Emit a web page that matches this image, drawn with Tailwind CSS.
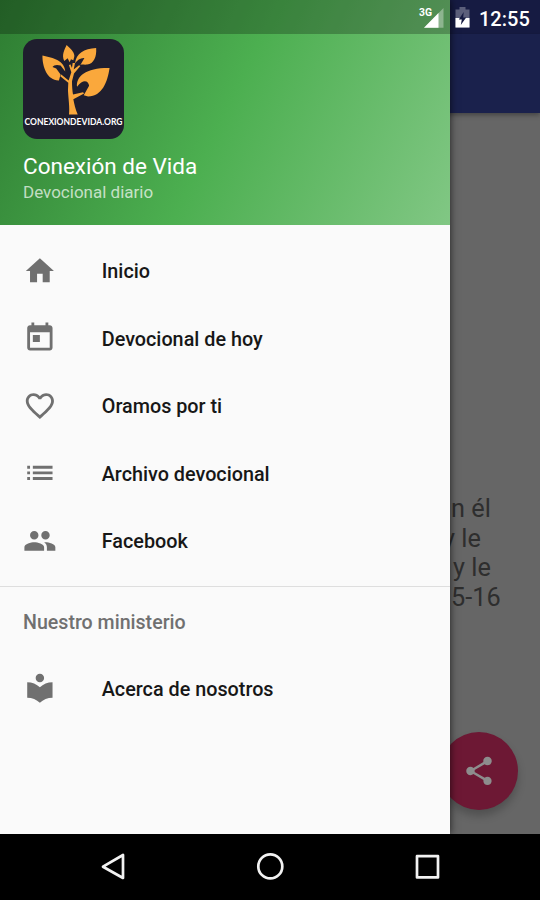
<!DOCTYPE html>
<html lang="es">
<head>
<meta charset="utf-8">
<title>Conexión de Vida</title>
<script src="https://cdn.jsdelivr.net/npm/@tailwindcss/browser@4"></script>
</head>
<body class="w-[540px] h-[900px] overflow-hidden bg-black font-['Roboto','Noto_Sans',sans-serif]">
<div class="relative w-[540px] h-[900px] overflow-hidden flex flex-col">
  <!-- Dimmed page -->
  <main class="h-[834px] shrink-0 bg-[#666666] flex flex-col">
    <div class="h-[34px] shrink-0 bg-[#161b42]"></div>
    <div class="h-[79px] shrink-0 bg-[#1a214c] shadow-[0_2px_5px_rgba(0,0,0,0.35)]"></div>
    <div class="pt-[381px] text-[25.3px] leading-[29.6px] text-[#2e2e2e] whitespace-nowrap">
      <p class="pl-[451px]">n él</p>
      <p class="pl-[443px]">y le</p>
      <p class="pl-[453px]">y le</p>
      <p class="pl-[451px]">5-16</p>
    </div>
    <div class="mt-auto mb-[24px] ml-[440px] size-[78px] rounded-full bg-[#6d1834] shadow-[0_6px_9px_rgba(0,0,0,0.22)] flex items-center justify-center">
      <svg class="size-[34px]" viewBox="0 0 24 24" fill="#8d8d8d"><path d="M18 16.08c-.76 0-1.44.3-1.96.77L8.91 12.7c.05-.23.09-.46.09-.7s-.04-.47-.09-.7l7.05-4.11c.54.5 1.25.81 2.04.81 1.66 0 3-1.34 3-3s-1.34-3-3-3-3 1.34-3 3c0 .24.04.47.09.7L8.04 9.81C7.5 9.31 6.79 9 6 9c-1.66 0-3 1.34-3 3s1.34 3 3 3c.79 0 1.5-.31 2.04-.81l7.12 4.16c-.05.21-.08.43-.08.65 0 1.61 1.31 2.92 2.92 2.92s2.92-1.31 2.92-2.92-1.31-2.92-2.92-2.92z"/></svg>
    </div>
  </main>

  <!-- System navigation -->
  <footer class="relative z-20 h-[66px] shrink-0 bg-black">
    <svg class="w-[540px] h-[66px]" viewBox="0 0 540 66" fill="none" stroke="#f2f2f2" stroke-width="2.7" stroke-linejoin="round"><path d="M103 32.700 123 21V44Z"/><circle cx="270.300" cy="32.400" r="12"/><rect x="417" y="22.200" width="21" height="21.200"/></svg>
  </footer>

  <!-- Drawer over the page -->
  <aside class="absolute z-10 left-0 top-0 w-[450px] h-[834px] bg-[#fafafa] shadow-[0_0_8px_rgba(0,0,0,0.7)] flex flex-col">
    <header class="h-[225px] shrink-0 px-[23px] pt-[39px] bg-[linear-gradient(116deg,#2e7d32_0%,#4caf50_50%,#81c784_100%)]">
      <svg class="block w-[101px] h-[100px] overflow-visible" viewBox="25 12 301 301" preserveAspectRatio="none">
        <rect x="25" y="12" width="301" height="301" rx="42" fill="#1f1e2e"/>
        <g fill="#faa83c">
          <path d="M155 30C165 40 178 50 178 62C178 68 176 72 175 76L168 73L164 82L158 70L148 78C139 60 149 44 155 30Z"/>
          <path d="M243 39C245 65 236 87 216 89C207 90 202 88 196 90L208 69C196 68 187 76 180 85C184 54 206 42 243 39Z"/>
          <path d="M83 62C116 69 149 78 151 110L137 92C127 88 116 90 113 96L124 101L137 119L132 137C98 138 82 96 83 62Z"/>
          <path d="M283 99C277 141 261 184 219 185L206 181L222 153C220 138 205 130 186 156C183 123 213 98 283 99Z"/>
          <path d="M173 84H180L176 104L192 91L196 93L177 116L171 139C171 155 172 166 174 179L204 172L207 176L175 193C178 209 181 222 188 239H162C165 220 160 190 159 166L160 144L136 124L139 119L161 137L169 112L162 91L166 88L171 99Z"/>
        </g>
        <text x="175.500" y="270" text-anchor="middle" textLength="292" lengthAdjust="spacingAndGlyphs" fill="#fff" font-family="Lato, sans-serif" font-weight="700" font-size="26">CONEXIONDEVIDA.ORG</text>
      </svg>
      <h1 class="mt-[12.5px] text-[22.5px] leading-[28px] text-white whitespace-nowrap">Conexión de Vida</h1>
      <p class="mt-[0.5px] text-[17px] leading-[24px] text-white/70 whitespace-nowrap">Devocional diario</p>
    </header>

    <nav class="pt-[12px] text-[19.8px] font-medium text-[#171717] whitespace-nowrap">
      <a class="flex h-[67.5px] items-center pl-[23px] gap-[45px]"><svg class="size-[33.75px]" viewBox="0 0 24 24" fill="#707070"><path d="M10 20v-6h4v6h5v-8h3L12 3 2 12h3v8z"/></svg><span class="pt-[3px]">Inicio</span></a>
      <a class="flex h-[67.5px] items-center pl-[23px] gap-[45px]"><svg class="size-[33.75px]" viewBox="0 0 24 24" fill="#707070"><path d="M19 3h-1V1h-2v2H8V1H6v2H5c-1.110 0-1.990.9-1.990 2L3 19c0 1.100.89 2 2 2h14c1.100 0 2-.9 2-2V5c0-1.100-.9-2-2-2zm0 16H5V8h14v11zM7 10h5v5H7z"/></svg><span class="pt-[3px]">Devocional de hoy</span></a>
      <a class="flex h-[67.5px] items-center pl-[23px] gap-[45px]"><svg class="size-[33.75px]" viewBox="0 0 24 24" fill="#707070"><path d="M16.500 3c-1.740 0-3.410.81-4.500 2.090C10.910 3.810 9.240 3 7.500 3 4.420 3 2 5.420 2 8.500c0 3.780 3.400 6.860 8.550 11.540L12 21.350l1.450-1.320C18.600 15.360 22 12.280 22 8.500 22 5.420 19.580 3 16.500 3zm-4.400 15.550l-.1.100-.1-.1C7.140 14.240 4 11.390 4 8.500 4 6.500 5.500 5 7.500 5c1.540 0 3.040.99 3.570 2.360h1.870C13.460 5.990 14.960 5 16.500 5c2 0 3.500 1.500 3.500 3.500 0 2.890-3.140 5.740-7.900 10.050z"/></svg><span class="pt-[3px]">Oramos por ti</span></a>
      <a class="flex h-[67.5px] items-center pl-[23px] gap-[45px]"><svg class="size-[33.75px]" viewBox="0 0 24 24" fill="#707070"><path d="M3 13h2v-2H3v2zm0 4h2v-2H3v2zm0-8h2V7H3v2zm4 4h14v-2H7v2zm0 4h14v-2H7v2zM7 7v2h14V7H7z"/></svg><span class="pt-[3px]">Archivo devocional</span></a>
      <a class="flex h-[67.5px] items-center pl-[23px] gap-[45px]"><svg class="size-[33.75px]" viewBox="0 0 24 24" fill="#707070"><path d="M16 11c1.660 0 2.990-1.340 2.990-3S17.660 5 16 5c-1.660 0-3 1.340-3 3s1.340 3 3 3zm-8 0c1.660 0 2.990-1.340 2.990-3S9.660 5 8 5C6.340 5 5 6.340 5 8s1.340 3 3 3zm0 2c-2.330 0-7 1.170-7 3.500V19h14v-2.500c0-2.330-4.670-3.500-7-3.500zm8 0c-.29 0-.62.02-.97.05 1.160.84 1.970 1.970 1.970 3.450V19h6v-2.500c0-2.330-4.670-3.500-7-3.500z"/></svg><span class="pt-[3px]">Facebook</span></a>
      <div class="mt-[11px] border-t-[1.500px] border-[#dedede]"></div>
      <h2 class="h-[68px] pt-[4px] pl-[23px] flex items-center text-[19.600px] text-[#707070]">Nuestro ministerio</h2>
      <a class="flex h-[67.5px] items-center pl-[23px] gap-[45px]"><svg class="size-[33.75px]" viewBox="0 0 24 24" fill="#707070"><path d="M12 11.550C9.640 9.350 6.480 8 3 8v11c3.480 0 6.640 1.350 9 3.550 2.360-2.190 5.520-3.550 9-3.550V8c-3.480 0-6.640 1.350-9 3.550zM12 8c1.660 0 3-1.340 3-3s-1.340-3-3-3-3 1.340-3 3 1.340 3 3 3z"/></svg><span class="pt-[3px]">Acerca de nosotros</span></a>
    </nav>
  </aside>

  <!-- Status bar over drawer and page -->
  <div class="absolute z-20 inset-x-0 top-0 h-[34px] flex">
    <div class="w-[450px] bg-black/25 flex justify-end pr-[5px]">
      <svg class="w-[28px] h-[34px]" viewBox="0 0 28 34"><path d="M26.500 8V27.700H7Z" fill="#fff" opacity=".35"/><path d="M7 27.700 21.500 13V27.700Z" fill="#fff"/><text x="2" y="16.300" textLength="13" lengthAdjust="spacingAndGlyphs" fill="#fff" font-family="Roboto, sans-serif" font-weight="700" font-size="11.500">3G</text></svg>
    </div>
    <div class="w-[90px] flex items-center">
      <svg class="w-[26px] h-[34px]" viewBox="0 0 26 34"><path d="M9.500 7h6v2.500h4V27.500H5.500V9.500h4Z" fill="#fff" opacity=".3"/><path d="M5.500 18h14v9.500h-14Z" fill="#fff"/><path d="M13.700 12 8.800 19.500h3l-1 5.500L16.200 17.500h-3Z" fill="#161b42"/></svg>
      <span class="ml-[3px] mt-[3px] text-[20px] leading-none font-medium text-white">12:55</span>
    </div>
  </div>
</div>
</body>
</html>
